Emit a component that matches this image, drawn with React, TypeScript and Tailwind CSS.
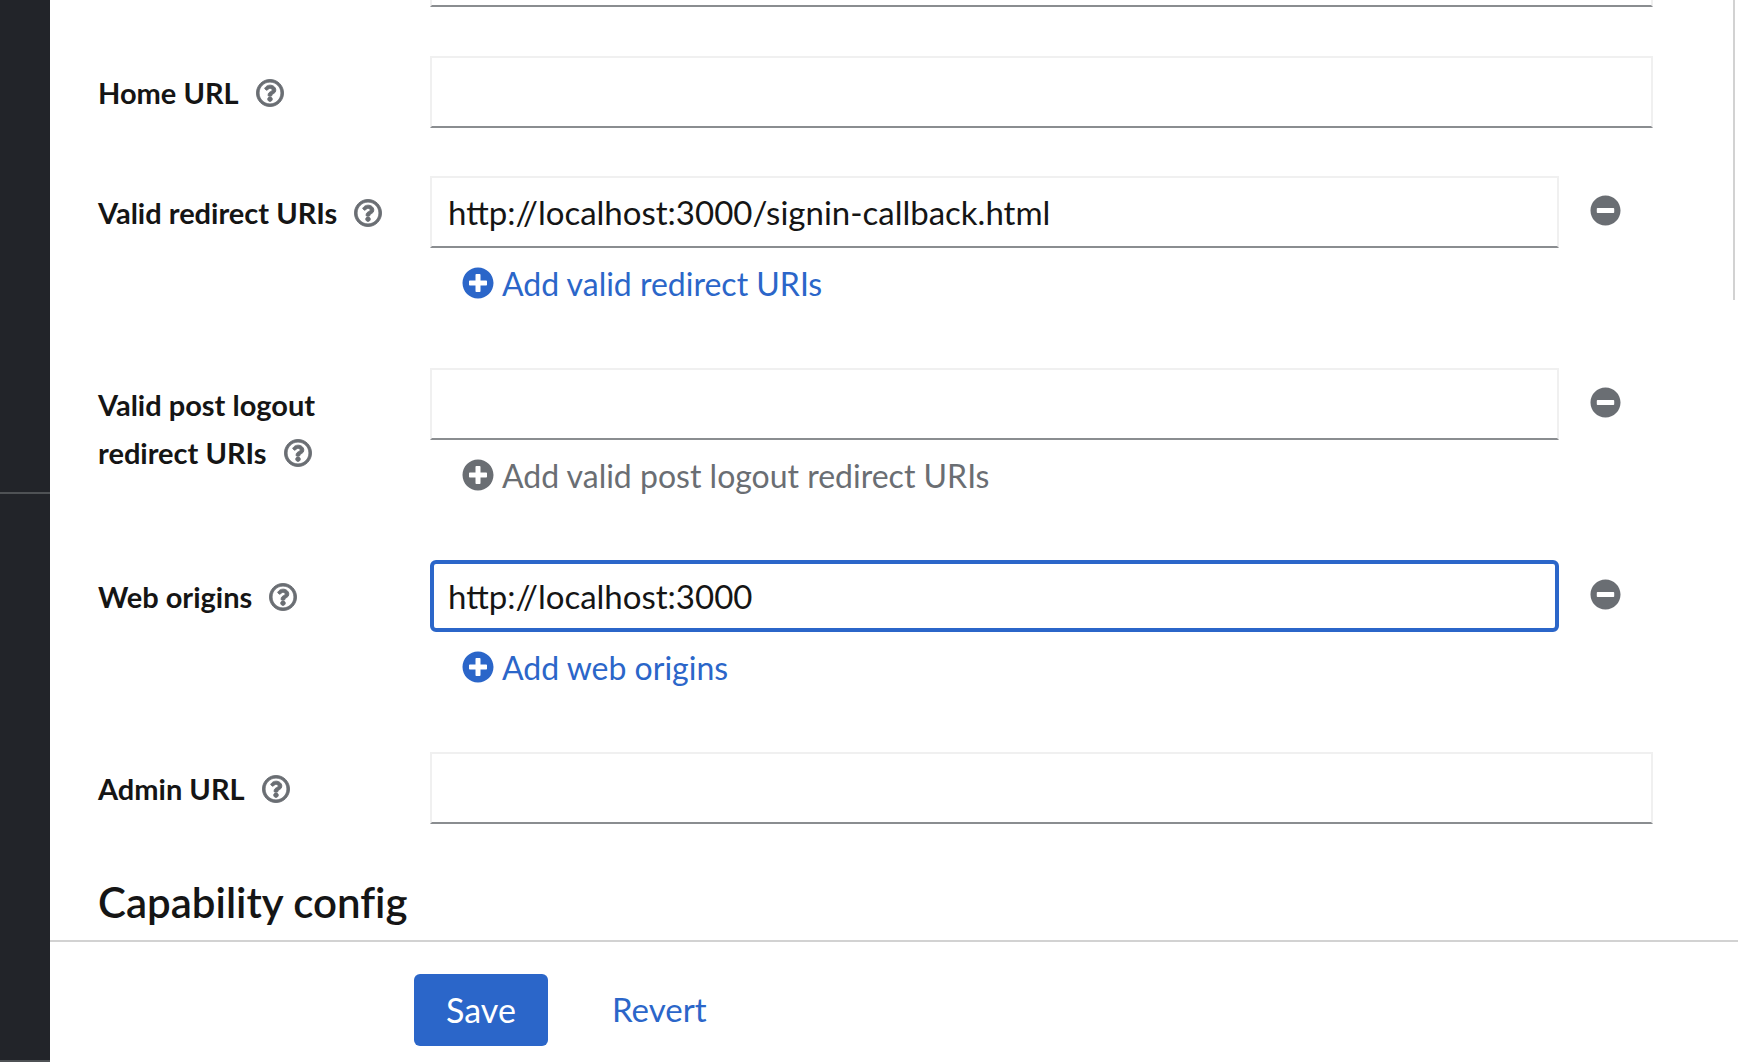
import { FaMinusCircle, FaPlusCircle, FaRegQuestionCircle } from 'react-icons/fa'

type Field = {
  label: string
  secondLine?: string
  value?: string
  focused?: boolean
  addLabel?: string
  addDisabled?: boolean
}

const fields: Field[] = [
  { label: 'Home URL' },
  { label: 'Valid redirect URIs', value: 'http://localhost:3000/signin-callback.html', addLabel: 'Add valid redirect URIs' },
  { label: 'Valid post logout', secondLine: 'redirect URIs', addLabel: 'Add valid post logout redirect URIs', addDisabled: true },
  { label: 'Web origins', value: 'http://localhost:3000', focused: true, addLabel: 'Add web origins' },
  { label: 'Admin URL' },
]

function FieldLabel({ field }: { field: Field }) {
  return (
    <div className="pl-[48px] pt-[1px] text-[29px] font-bold leading-[48px] text-[#151515]">
      {field.secondLine && <div className="pt-[12px]">{field.label}</div>}
      <div className={`flex items-center gap-[17px] ${field.secondLine ? '' : 'h-[71px]'}`}>
        <span>{field.secondLine ?? field.label}</span>
        <FaRegQuestionCircle className="h-[28px] w-[28px] text-[#6a6e73]" stroke="currentColor" strokeWidth={16} />
      </div>
    </div>
  )
}

function FieldInput({ field }: { field: Field }) {
  const border = field.focused
    ? 'rounded-[6px] border-[4px] border-[#2b66c9] pl-[14px]'
    : 'border-2 border-[#f0f0f0] border-b-[#8a8d90] pl-[16px]'
  return (
    <div className={`flex h-[72px] flex-1 items-center pt-[1px] text-[33px] text-[#151515] ${border}`}>
      {field.value}
    </div>
  )
}

function FormRow({ field }: { field: Field }) {
  const isList = Boolean(field.addLabel)
  return (
    <div className="grid grid-cols-[380px_1fr]">
      <FieldLabel field={field} />
      <div className={isList ? 'w-[1221px]' : 'w-[1223px]'}>
        <div className="flex items-center">
          <FieldInput field={field} />
          {isList && (
            <div className="flex w-[92px] justify-center">
              <FaMinusCircle className="mb-[3px] h-[31px] w-[31px] text-[#6a6e73]" />
            </div>
          )}
        </div>
        {field.addLabel && (
          <div
            className={`flex h-[72px] items-center gap-[8px] pl-[32px] text-[32px] ${
              field.addDisabled ? 'text-[#6a6e73]' : 'text-[#2b66c9]'
            }`}
          >
            <FaPlusCircle className="mb-[2px] h-[32px] w-[32px]" />
            {field.addLabel}
          </div>
        )}
      </div>
    </div>
  )
}

export default function App() {
  return (
    <div className="flex h-screen overflow-hidden bg-white font-['Lato',sans-serif]">
      <aside className="flex w-[50px] shrink-0 flex-col bg-[#222429]">
        <div className="h-[494px] border-b-2 border-[#4f5255]" />
        <div className="flex-1 border-b-2 border-[#4f5255]" />
      </aside>
      <main className="relative flex min-w-0 flex-1 flex-col">
        <div className="h-[940px] overflow-hidden">
          <div className="ml-[380px] h-[7px] w-[1223px] border-x-2 border-b-2 border-x-[#f0f0f0] border-b-[#8a8d90]" />
          <div className="mt-[49px] flex flex-col gap-[48px]">
            {fields.map(field => (
              <FormRow key={field.label} field={field} />
            ))}
          </div>
          <h2 className="mt-[48px] pl-[48px] text-[42px] font-semibold leading-[60px] text-[#151515] [font-variant-ligatures:none]">
            Capability config
          </h2>
        </div>
        <footer className="flex flex-1 items-start gap-[64px] border-t-2 border-[#d2d2d2] pl-[364px] pt-[32px]">
          <button className="h-[72px] w-[134px] rounded-[6px] bg-[#2b66c9] pb-[2px] text-[34px] text-white">Save</button>
          <button className="h-[72px] text-[33px] text-[#2b66c9]">Revert</button>
        </footer>
        <div className="absolute right-[3px] top-0 h-[300px] w-[2px] bg-[#d2d2d2]" />
      </main>
    </div>
  )
}
